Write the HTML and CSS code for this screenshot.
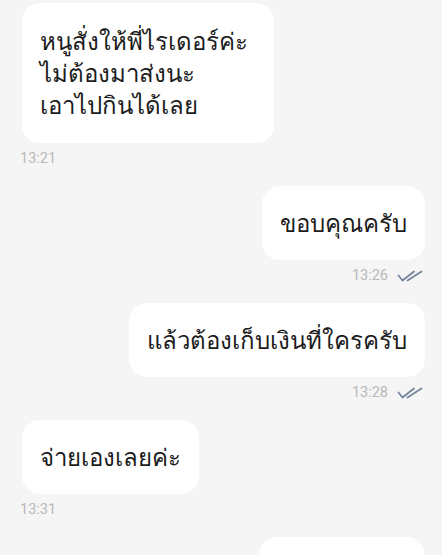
FILE: index.html
```html
<!DOCTYPE html>
<html lang="th">
<head>
  <meta charset="UTF-8">
  <meta name="viewport" content="width=device-width, initial-scale=1.0">
  <title>Chat</title>
  <link rel="stylesheet" href="styles.css">
</head>
<body>

  <main class="chat">

    <div class="msg msg-in">
      <div class="bubble bubble-wide">หนูสั่งให้พี่ไรเดอร์ค่ะ<br>ไม่ต้องมาส่งนะ<br>เอาไปกินได้เลย</div>
      <div class="meta">13:21</div>
    </div>

    <div class="msg msg-out">
      <div class="bubble">ขอบคุณครับ</div>
      <div class="meta">
        <span>13:26</span>
        <svg class="tick" viewBox="0 0 26 12" width="26" height="12">
          <path d="M1.5 5.5 L5.5 10.5 L17 1.5" />
          <path d="M10.5 10.5 L24.5 1.5" />
        </svg>
      </div>
    </div>

    <div class="msg msg-out">
      <div class="bubble">แล้วต้องเก็บเงินที่ใครครับ</div>
      <div class="meta">
        <span>13:28</span>
        <svg class="tick" viewBox="0 0 26 12" width="26" height="12">
          <path d="M1.5 5.5 L5.5 10.5 L17 1.5" />
          <path d="M10.5 10.5 L24.5 1.5" />
        </svg>
      </div>
    </div>

    <div class="msg msg-in">
      <div class="bubble">จ่ายเองเลยค่ะ</div>
      <div class="meta">13:31</div>
    </div>

    <div class="msg msg-out">
      <div class="bubble bubble-peek">&nbsp;</div>
    </div>

  </main>

</body>
</html>
```

FILE: styles.css
```css
body {
  margin: 0;
  background-color: #f5f5f5;
  font-family: "Noto Sans", "DejaVu Sans", sans-serif;
  overflow: hidden;
}

.chat {
  display: flex;
  flex-direction: column;
  gap: 18px;
  padding: 3px 17px 0 22px;
}

.msg {
  display: flex;
  flex-direction: column;
}

.msg-in {
  align-self: flex-start;
  align-items: flex-start;
}

.msg-out {
  align-self: flex-end;
  align-items: flex-end;
}

.bubble {
  background-color: #ffffff;
  border-radius: 18px;
  padding: 21px 18px;
  font-size: 24px;
  line-height: 32px;
  color: #1c1c1c;
}

.bubble-wide {
  padding: 22px 26px 22px 18px;
}

.bubble-peek {
  width: 130px;
}

.meta {
  display: flex;
  align-items: center;
  gap: 9px;
  margin-top: 7px;
  font-family: Roboto, sans-serif;
  font-size: 14.5px;
  line-height: 18px;
  color: #b8b8b8;
}

.msg-in .meta {
  margin-left: -2px;
}

.msg-out .meta {
  margin-right: 2px;
}

.tick {
  fill: none;
  stroke: #72849c;
  stroke-width: 1.7;
  stroke-linecap: round;
  stroke-linejoin: round;
}
```
